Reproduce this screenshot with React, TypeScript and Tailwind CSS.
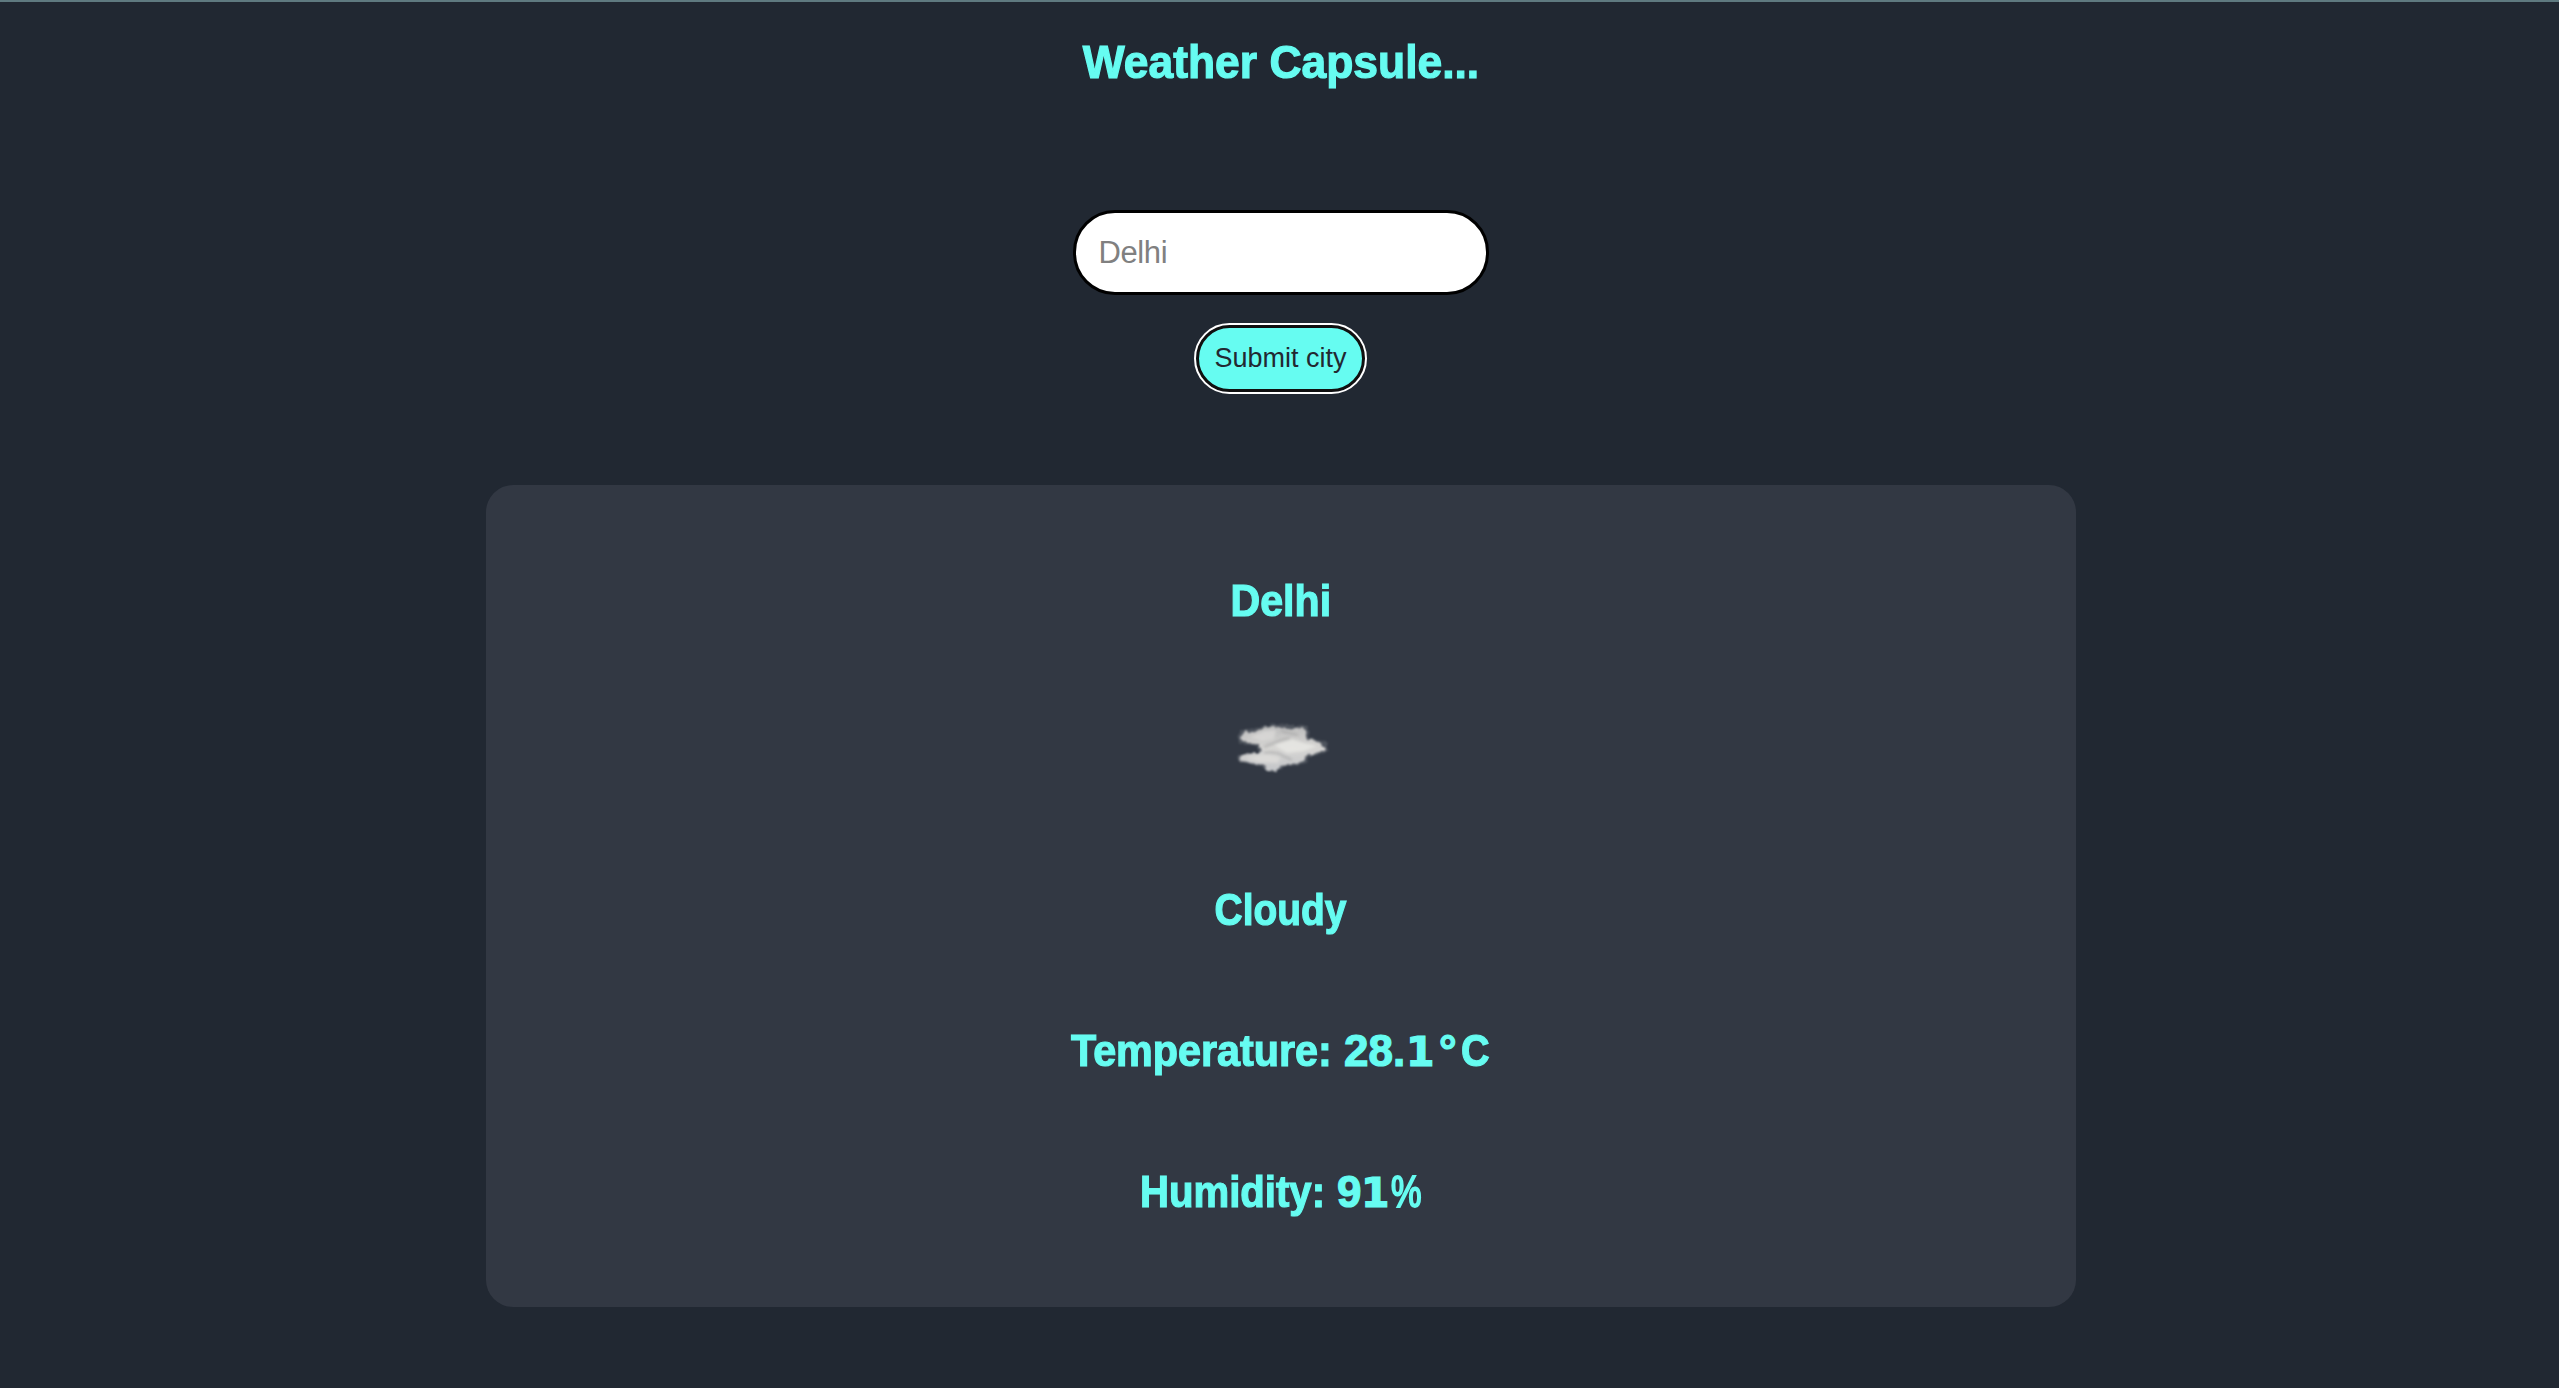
function Cloud() {
  return (
    <svg className="mb-3.5 h-[76px] w-[130px]" viewBox="0 0 130 76" aria-label="Cloudy">
      <defs>
        <filter id="puff" x="-10%" y="-20%" width="120%" height="140%">
          <feTurbulence type="fractalNoise" baseFrequency="0.2" numOctaves="3" seed="4" result="n" />
          <feDisplacementMap in="SourceGraphic" in2="n" scale="4" xChannelSelector="R" yChannelSelector="G" />
          <feGaussianBlur stdDeviation="0.9" />
        </filter>
        <filter id="soft" x="-30%" y="-30%" width="160%" height="160%">
          <feGaussianBlur stdDeviation="1.8" />
        </filter>
        <linearGradient id="shade" x1="0" y1="0" x2="0" y2="1">
          <stop offset="0" stopColor="#bcbcbc" />
          <stop offset="0.5" stopColor="#d6d5d3" />
          <stop offset="1" stopColor="#c3c5c8" />
        </linearGradient>
      </defs>
      <path filter="url(#puff)" opacity="0.4" fill="#7b8087" d="M18 28L20 20L33 19L53 14L87 16L90 28L106 31L109 42L88 47L86 53L62 58L52 63L42 57L18 51L18 45L39 43L37 36L20 34Z" />
      <path filter="url(#puff)" fill="url(#shade)" d="M20 30L25 20L33 23L42 18L54 16L66 19L84 17L87 29L98 31L107 40L98 43L87 45L84 51L68 55L60 56L56 61L48 61L45 55L30 53L19 50L22 45L43 42L39 35L28 32Z" />
      <g filter="url(#soft)">
        <path fill="#e8e7e4" opacity="0.85" d="M54 35L72 29L84 33L97 36L84 41L67 43Z" />
        <path fill="#dedddb" opacity="0.8" d="M26 48L46 44L60 47L58 53L40 52Z" />
        <path fill="#dddcda" opacity="0.7" d="M30 27L44 21L56 20L54 29L42 31Z" />
        <path fill="none" stroke="#9f9f9f" strokeWidth="2" opacity="0.6" d="M44 43Q57 41 65 47L72 50M44 37L59 31L70 28M61 21L78 25" />
      </g>
    </svg>
  );
}

const row =
  "flex h-[141px] items-center justify-center whitespace-pre text-[44px] leading-[141px] [-webkit-text-stroke:1.2px_#66fcf1]";

export default function App() {
  return (
    <main className="h-[1388px] w-full overflow-hidden border-t-2 border-[#5f7a80] bg-[#212832] text-center font-['Liberation_Sans',sans-serif] text-[#66fcf1]">
      <h1 className="h-[120px] scale-x-[0.945] pl-[3px] text-[47px] leading-[120px] font-bold [-webkit-text-stroke:1.2px_#66fcf1]">
        Weather Capsule...
      </h1>
      <form className="mt-[88px] flex flex-col items-center pl-[2px]">
        <input
          placeholder="Delhi"
          className="h-[85px] w-[416px] rounded-[42px] border-3 border-black bg-white pl-[23px] text-[31px] tracking-[-0.4px] placeholder:text-[#808080]"
        />
        <button
          type="button"
          className="mt-[30px] h-[67px] w-[169px] rounded-[34px] border-3 border-[#101010] bg-[#66fcf1] text-[27px] text-[#222831] outline-2 outline-white"
        >
          Submit city
        </button>
      </form>
      <section className="relative left-px mx-auto mt-[93px] h-[822px] w-[1590px] rounded-[27px] bg-[#323843] pt-[45px] text-left font-bold">
        <h2 className={row}>
          <span className="scale-x-[0.935]">Delhi</span>
        </h2>
        <div className="flex h-[168px] items-center justify-center pl-[9px]">
          <Cloud />
        </div>
        <h2 className={row}>
          <span className="scale-x-[0.885]">Cloudy</span>
        </h2>
        <h2 className={`${row} pl-[3px]`}>
          <span className="w-[273px] origin-left scale-x-[0.938]">Temperature: </span>
          <span className="w-[62px]">28.</span>
          <span className="w-[33px] translate-y-[1.5px] font-['DejaVu_Sans'] text-[41px]">1</span>
          <span className="w-[22px]">°</span>
          <span className="w-[32px] origin-left scale-x-[0.9]">C</span>
        </h2>
        <h2 className={`${row} pl-[3px]`}>
          <span className="w-[197px] origin-left scale-x-[0.912]">Humidity: </span>
          <span className="w-[24px]">9</span>
          <span className="w-[30px] translate-y-[1.5px] font-['DejaVu_Sans'] text-[41px]">1</span>
          <span className="w-[33px] origin-left scale-x-[0.78] font-normal [-webkit-text-stroke:2px_#66fcf1]">%</span>
        </h2>
      </section>
    </main>
  );
}
